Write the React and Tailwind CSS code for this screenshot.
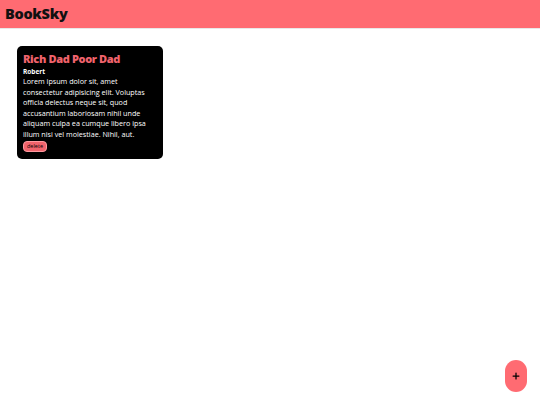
import { Plus } from "lucide-react";

const lines = [
  "Lorem ipsum dolor sit, amet",
  "consectetur adipisicing elit. Voluptas",
  "officia delectus neque sit, quod",
  "accusantium laboriosam nihil unde",
  "aliquam culpa ea cumque libero ipsa",
  "illum nisi vel molestiae. Nihil, aut.",
];

export default function App() {
  return (
    <div className="min-h-screen bg-white font-['Open_Sans',sans-serif] relative">
      <nav className="h-[29px] bg-[#ff6b72] border-b border-[#e8e8e8] flex items-center px-[5px]">
        <div className="text-[14.5px] font-extrabold text-[#111] tracking-[-0.3px]">BookSky</div>
      </nav>

      <main className="px-[17px] pt-[17px]">
        <div className="w-[146px] bg-black rounded-[5px] px-[6px] pt-[5px] pb-[7px] flex flex-col items-start">
          <div className="text-[11px] font-extrabold text-[#f0636c] leading-[15px] tracking-[-0.35px]">Rich Dad Poor Dad</div>
          <div className="text-[6.5px] font-bold text-white leading-[9px] mt-[1px]">Robert</div>
          <div className="text-[7.2px] text-white leading-[10.6px] whitespace-nowrap">
            {lines.map((l) => (
              <div key={l}>{l}</div>
            ))}
          </div>
          <button
            type="button"
            className="mt-[1px] bg-[#f0636c] border border-[#ff9aa0] text-black text-[5.5px] rounded-[4px] px-[3px] py-[1px] leading-[7px]"
          >
            delete
          </button>
        </div>
      </main>

      <button
        type="button"
        className="absolute right-[13px] bottom-[13px] w-[22px] h-[32px] rounded-full bg-[#ff6b72] flex items-center justify-center"
      >
        <Plus size={10} strokeWidth={3} className="text-black" />
      </button>
    </div>
  );
}
